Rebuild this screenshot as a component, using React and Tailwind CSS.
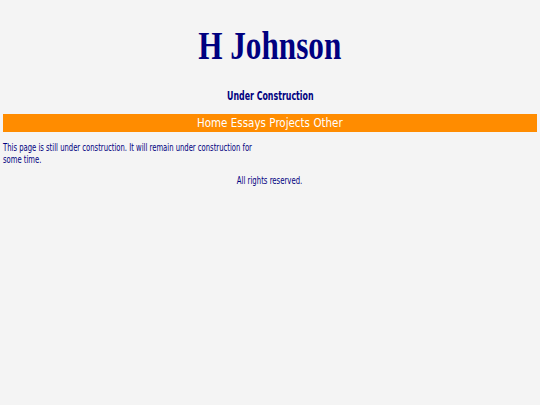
import React from 'react';

const NAV = ['Home', 'Essays', 'Projects', 'Other'];

const App = () => {
  return (
    <div className="min-h-[405px] bg-[#f4f4f4] text-[#000080] px-[3px]" style={{ fontFamily: '"DejaVu Sans Condensed", "DejaVu Sans", sans-serif' }}>
      <div className="pt-[22px] flex justify-center">
        <h1
          className="text-[40px] leading-[48px] font-bold scale-x-[0.78]"
          style={{ fontFamily: '"Liberation Serif", serif' }}
        >
          H Johnson
        </h1>
      </div>

      <div className="mt-[18px] flex justify-center">
        <h2 className="text-[12px] font-bold leading-[16px] scale-x-[0.73]">Under Construction</h2>
      </div>

      <nav className="mt-[10px] bg-[#ff8c00] h-[18px] flex justify-center items-center text-white text-[13px] leading-[18px]">
        <div className="flex gap-[4px] scale-x-[0.88]">
          {NAV.map((item) => (
            <span key={item}>{item}</span>
          ))}
        </div>
      </nav>

      <p className="mt-[10px] w-[334px] text-[10px] leading-[12px] origin-left scale-x-[0.76]">
        This page is still under construction. It will remain under construction for some time.
      </p>

      <div className="mt-[9px] flex justify-center">
        <p className="text-[10px] leading-[12px] scale-x-[0.77]">All rights reserved.</p>
      </div>
    </div>
  );
};

export default App;
